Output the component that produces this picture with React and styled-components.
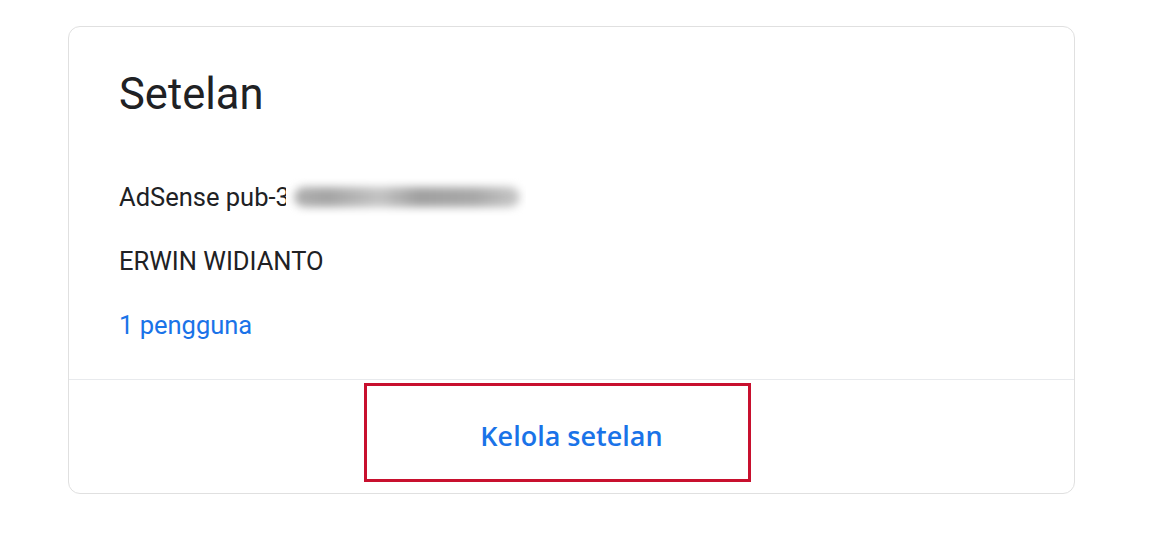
import * as React from "react";
import styled, { createGlobalStyle } from "styled-components";

const GlobalStyle = createGlobalStyle`
  html, body {
    margin: 0;
    padding: 0;
    background: #ffffff;
  }
  body {
    font-family: Roboto, "Noto Sans", Arial, sans-serif;
    color: #202124;
  }
`;

const Page = styled.div`
  width: 1158px;
  height: 536px;
  padding: 26px 0 0 68px;
  box-sizing: border-box;
`;

const Card = styled.section`
  width: 1007px;
  height: 468px;
  box-sizing: border-box;
  border: 1px solid #e0e0e0;
  border-radius: 12px;
  display: flex;
  flex-direction: column;
  background: #fff;
`;

const CardBody = styled.div`
  flex: 1;
  padding: 42px 0 0 50px;
`;

const Title = styled.h2`
  margin: 0 0 64px;
  font-size: 43.5px;
  font-weight: 400;
  line-height: 52px;
  color: #202124;
  letter-spacing: 0;
`;

const Row = styled.div`
  font-size: 25.5px;
  line-height: 24px;
  height: 24px;
  margin-bottom: 40px;
  color: ${(props) => (props.$link ? "#1a73e8" : "#202124")};
  display: flex;
  align-items: center;
  white-space: nowrap;
`;

const Masked = styled.span`
  position: relative;
  display: inline-block;
  width: 240px;
  height: 38px;
  margin-left: -4px;
  overflow: hidden;
  background: #ffffff;
`;

const MaskedDigits = styled.span`
  position: absolute;
  left: 8px;
  top: 9px;
  width: 226px;
  height: 20px;
  border-radius: 10px;
  background: linear-gradient(
    90deg,
    #b0b0b0 0%,
    #a4a4a4 15%,
    #c4c4c4 38%,
    #a0a0a0 55%,
    #a8a8a8 80%,
    #c8c8c8 100%
  );
  filter: blur(4px);
`;

const Footer = styled.div`
  position: relative;
  height: 113px;
  border-top: 1px solid #e8eaed;
  display: flex;
  align-items: center;
  justify-content: center;
`;

const ActionButton = styled.button`
  border: none;
  background: transparent;
  font-family: "Open Sans", Roboto, Arial, sans-serif;
  font-size: 27px;
  font-weight: 600;
  color: #1a73e8;
  padding: 0;
  margin-top: -2px;
  cursor: pointer;
`;

const Highlight = styled.div`
  position: absolute;
  left: 295px;
  top: 3px;
  width: 387px;
  height: 99px;
  box-sizing: border-box;
  border: 3px solid #c8102e;
  pointer-events: none;
`;

const App = () => (
  <>
    <GlobalStyle />
    <Page>
      <Card>
        <CardBody>
          <Title>Setelan</Title>
          <Row>
            AdSense pub-3
            <Masked>
              <MaskedDigits />
            </Masked>
          </Row>
          <Row>ERWIN WIDIANTO</Row>
          <Row $link>1 pengguna</Row>
        </CardBody>
        <Footer>
          <ActionButton>Kelola setelan</ActionButton>
          <Highlight />
        </Footer>
      </Card>
    </Page>
  </>
);

export default App;
